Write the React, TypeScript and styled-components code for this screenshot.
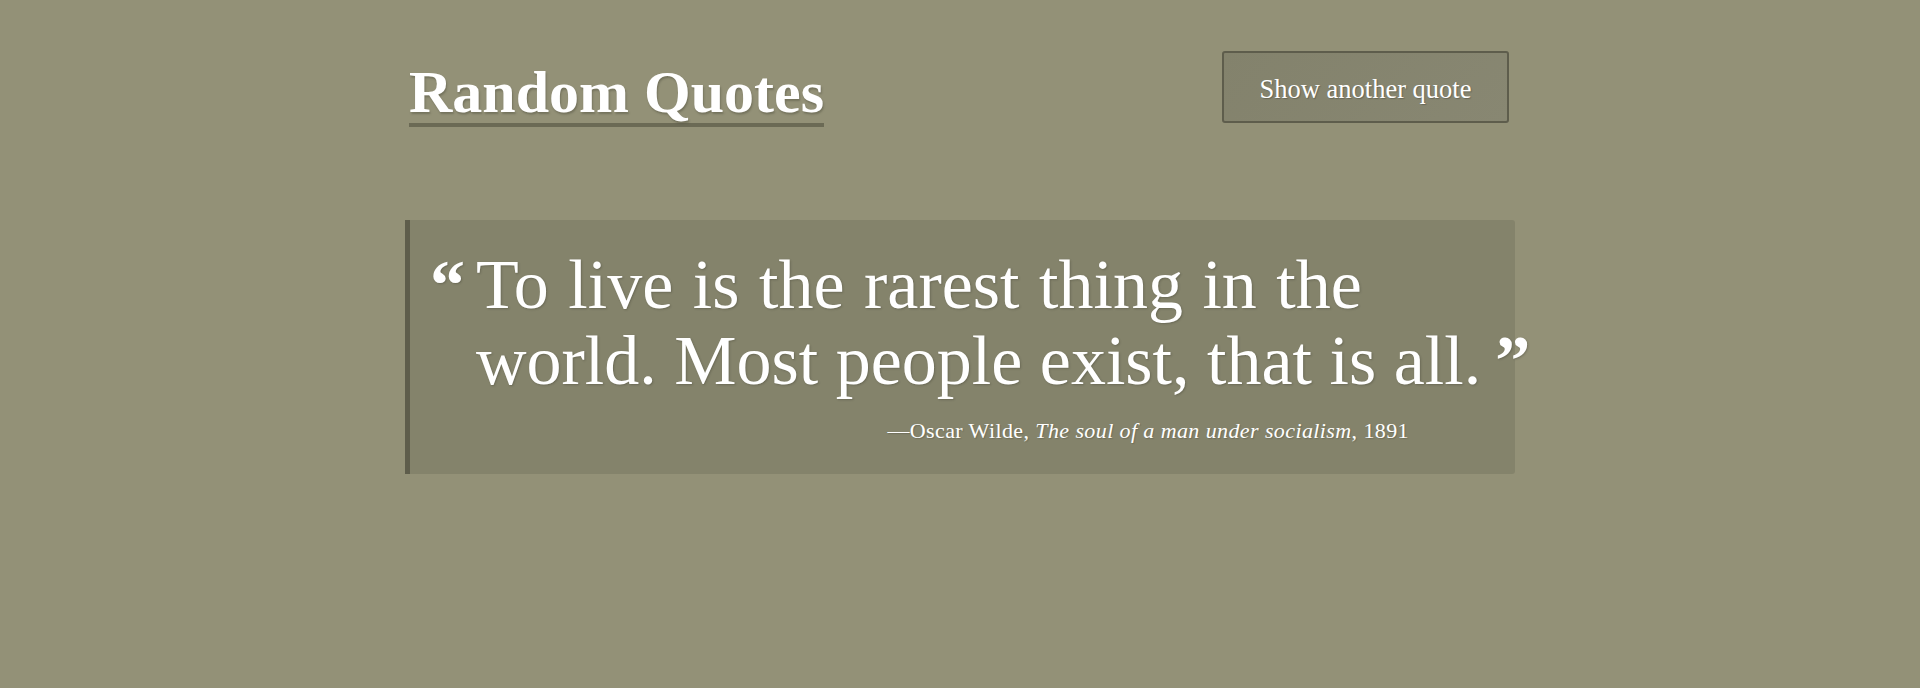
import React from "react";
import styled, { createGlobalStyle } from "styled-components";

const GlobalStyle = createGlobalStyle`
  html, body {
    margin: 0;
    padding: 0;
    background: #939177;
    height: 100%;
  }
  body {
    font-family: "Liberation Serif", "Times New Roman", serif;
    color: #ffffff;
  }
`;

const Page = styled.div`
  min-height: 688px;
  background: #939177;
  display: flex;
  justify-content: center;
`;

const Container = styled.main`
  width: 1110px;
  padding-top: 51px;
  display: flex;
  flex-direction: column;
`;

const Header = styled.header`
  display: flex;
  justify-content: space-between;
  align-items: flex-start;
  padding: 0 6px 0 4px;
`;

const Title = styled.h1`
  margin: 10px 0 0;
  font-size: 60px;
  line-height: 62px;
  font-weight: 700;
  color: #ffffff;
  border-bottom: 4px solid #6b6a55;
  text-shadow: 1px 2px 2px rgba(60, 60, 45, 0.35);
`;

const NewQuoteButton = styled.button`
  width: 287px;
  height: 72px;
  box-sizing: border-box;
  display: flex;
  align-items: center;
  justify-content: center;
  padding: 4px 0 0;
  border: 2px solid #5e5d4c;
  border-radius: 3px;
  background: linear-gradient(135deg, #83826c 0%, #888772 100%);
  color: #ffffff;
  font-family: "Liberation Serif", "Times New Roman", serif;
  font-size: 26.5px;
  text-shadow: 1px 1px 1px rgba(50, 50, 40, 0.35);
  cursor: pointer;
`;

const QuoteBox = styled.blockquote`
  margin: 93px 0 0;
  padding: 27px 0 29px 66px;
  background: #84836b;
  border-left: 5px solid #5e5d4b;
  border-radius: 0 3px 3px 0;
  overflow: visible;
`;

const QuoteText = styled.p`
  margin: 0;
  font-size: 70px;
  line-height: 76px;
  white-space: nowrap;
  text-indent: -46px;
  color: #ffffff;
  text-shadow: 1px 1px 2px rgba(50, 50, 40, 0.3);
`;

const Line = styled.span<{ $spacing?: number }>`
  word-spacing: ${(p) => p.$spacing ?? 0}px;
`;

const Mark = styled.span<{ $side: "open" | "close" }>`
  font-weight: 700;
  word-spacing: 0;
  ${(p) => (p.$side === "open" ? "margin-right: 11px;" : "margin-left: 14px;")}
`;

const Cite = styled.footer`
  margin-top: 18px;
  padding-right: 106px;
  text-align: right;
  font-size: 22px;
  letter-spacing: 0.4px;
  line-height: 28px;
  color: #ffffff;
  text-shadow: 1px 1px 1px rgba(50, 50, 40, 0.25);
`;

const Work = styled.cite`
  font-style: italic;
`;

export default function App() {
  return (
    <>
      <GlobalStyle />
      <Page>
        <Container>
          <Header>
            <Title>Random Quotes</Title>
            <NewQuoteButton type="button">Show another quote</NewQuoteButton>
          </Header>
          <QuoteBox>
            <QuoteText>
              <Mark $side="open">“</Mark>
              <Line $spacing={2}>To live is the rarest thing in the</Line>
              <br />
              <Line>world. Most people exist, that is all.</Line>
              <Mark $side="close">”</Mark>
            </QuoteText>
            <Cite>
              —Oscar Wilde, <Work>The soul of a man under socialism</Work>, 1891
            </Cite>
          </QuoteBox>
        </Container>
      </Page>
    </>
  );
}
